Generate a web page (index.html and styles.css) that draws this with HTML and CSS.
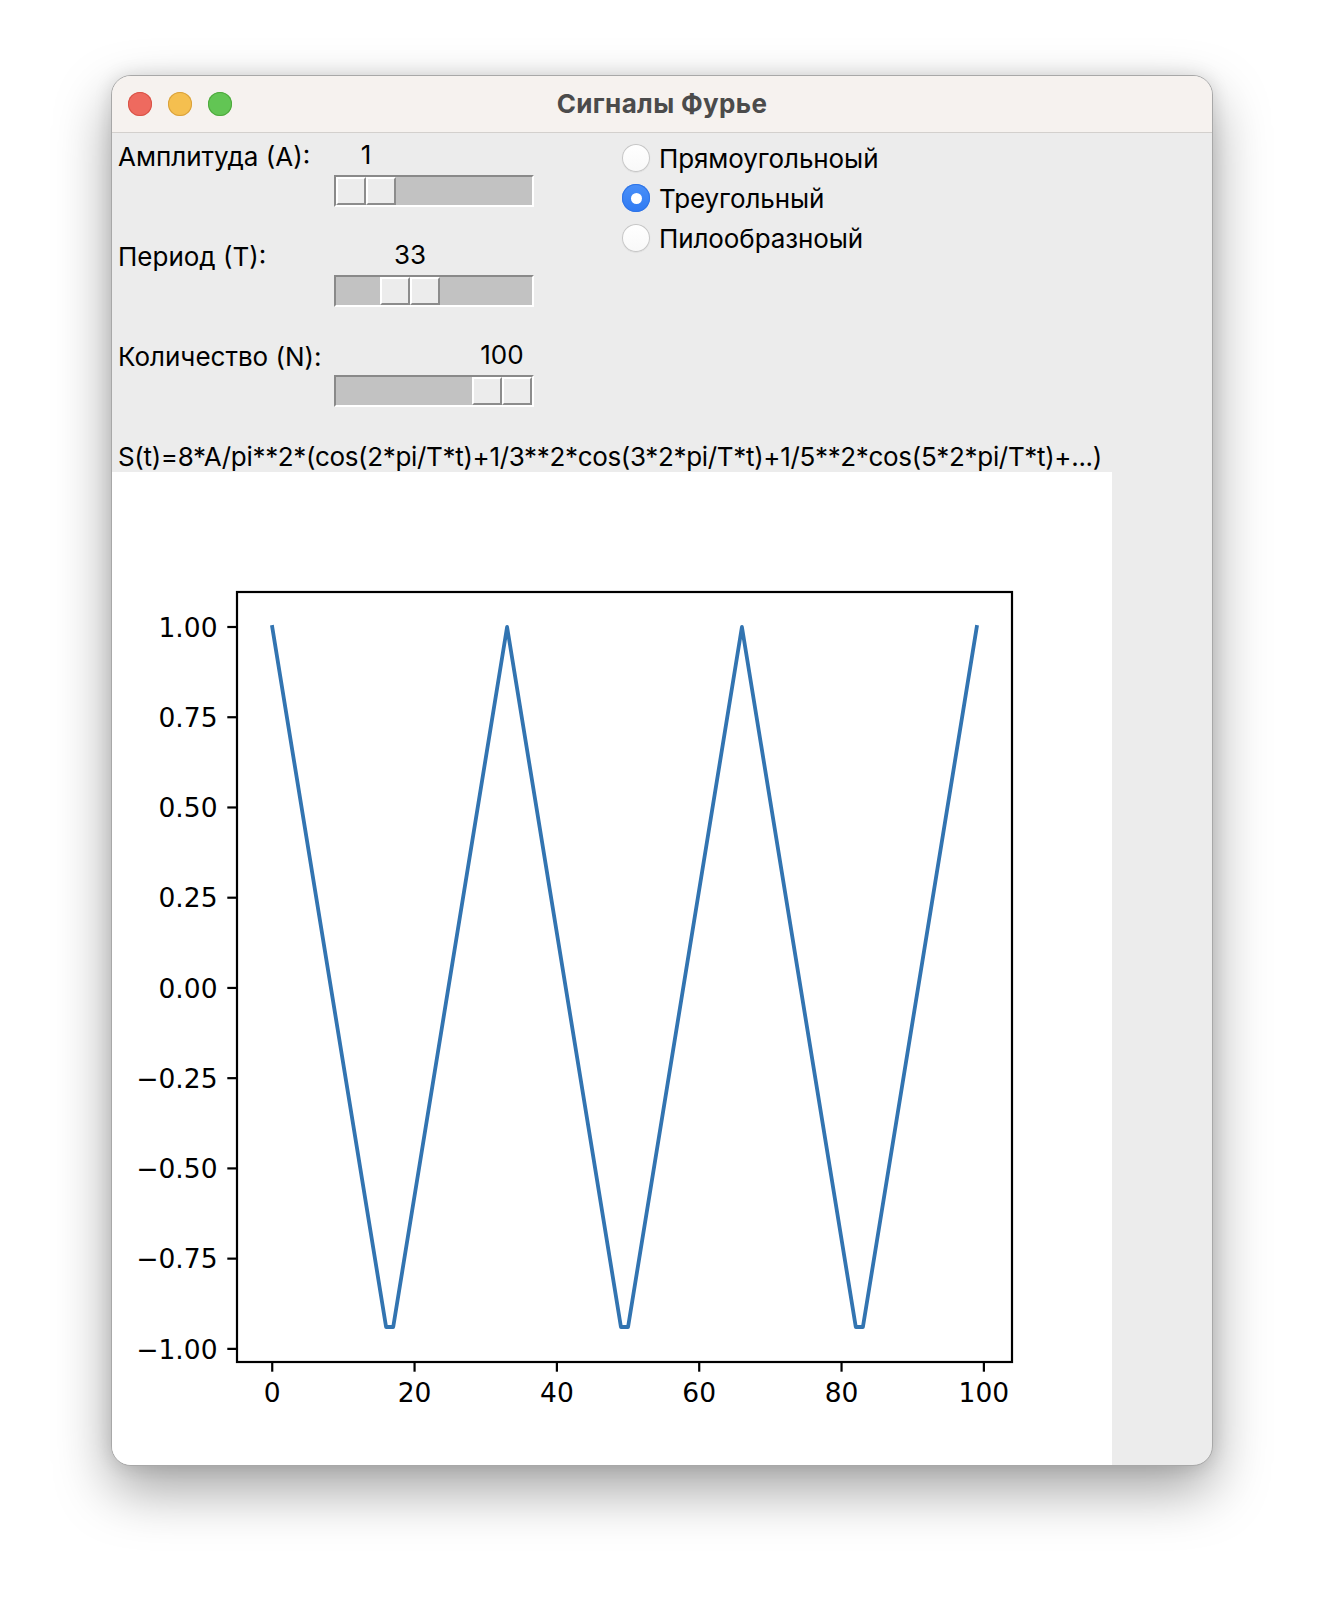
FILE: index.html
```html
<!DOCTYPE html>
<html lang="ru">
<head>
<meta charset="utf-8">
<title>Сигналы Фурье</title>
<link rel="stylesheet" href="styles.css">
</head>
<body>
<div class="stage">
  <div class="window">
    <div class="titlebar">
      <div class="lights">
        <span class="light red"></span>
        <span class="light yellow"></span>
        <span class="light green"></span>
      </div>
      <div class="title">Сигналы Фурье</div>
      <div></div>
    </div>

    <div class="controls">
      <div class="sliders">
        <div class="row">
          <div class="label">Амплитуда (А):</div>
          <div class="scale" style="--p:0">
            <div class="value-track"><div class="value">1</div></div>
            <div class="trough"><div class="handle"><span class="half"></span><span class="half"></span></div></div>
          </div>
        </div>
        <div class="row">
          <div class="label">Период (Т):</div>
          <div class="scale" style="--p:0.3232">
            <div class="value-track"><div class="value">33</div></div>
            <div class="trough"><div class="handle"><span class="half"></span><span class="half"></span></div></div>
          </div>
        </div>
        <div class="row">
          <div class="label">Количество (N):</div>
          <div class="scale" style="--p:1">
            <div class="value-track"><div class="value">100</div></div>
            <div class="trough"><div class="handle"><span class="half"></span><span class="half"></span></div></div>
          </div>
        </div>
      </div>

      <div class="radios">
        <div class="radio"><span class="dot"></span><span class="rtext">Прямоугольноый</span></div>
        <div class="radio"><span class="dot on"></span><span class="rtext">Треугольный</span></div>
        <div class="radio"><span class="dot"></span><span class="rtext">Пилообразноый</span></div>
      </div>
    </div>

    <div class="formula">S(t)=8*A/pi**2*(cos(2*pi/T*t)+1/3**2*cos(3*2*pi/T*t)+1/5**2*cos(5*2*pi/T*t)+...)</div>

    <svg class="canvas" width="1000" height="1000" viewBox="0 0 1000 1000">
      <rect x="0" y="0" width="1000" height="1000" fill="#ffffff"/>
      <polyline class="wave" points="160.23,155 274.09,855 281.21,855 395.08,155 508.94,855 516.06,855 629.92,155 743.79,855 750.91,855 864.77,155"/>
      <rect class="spine" x="125" y="120" width="775" height="770"/>
      <g class="ticks">
        <line x1="115.3" y1="155" x2="125" y2="155"/>
        <line x1="115.3" y1="245.23" x2="125" y2="245.23"/>
        <line x1="115.3" y1="335.47" x2="125" y2="335.47"/>
        <line x1="115.3" y1="425.7" x2="125" y2="425.7"/>
        <line x1="115.3" y1="515.94" x2="125" y2="515.94"/>
        <line x1="115.3" y1="606.17" x2="125" y2="606.17"/>
        <line x1="115.3" y1="696.41" x2="125" y2="696.41"/>
        <line x1="115.3" y1="786.64" x2="125" y2="786.64"/>
        <line x1="115.3" y1="876.88" x2="125" y2="876.88"/>
        <line x1="160.23" y1="890" x2="160.23" y2="899.7"/>
        <line x1="302.56" y1="890" x2="302.56" y2="899.7"/>
        <line x1="444.89" y1="890" x2="444.89" y2="899.7"/>
        <line x1="587.22" y1="890" x2="587.22" y2="899.7"/>
        <line x1="729.55" y1="890" x2="729.55" y2="899.7"/>
        <line x1="871.88" y1="890" x2="871.88" y2="899.7"/>
      </g>
      <g class="ylabels">
        <text x="105.5" y="164.6">1.00</text>
        <text x="105.5" y="254.8">0.75</text>
        <text x="105.5" y="345.1">0.50</text>
        <text x="105.5" y="435.3">0.25</text>
        <text x="105.5" y="525.5">0.00</text>
        <text x="105.5" y="615.8">−0.25</text>
        <text x="105.5" y="706">−0.50</text>
        <text x="105.5" y="796.2">−0.75</text>
        <text x="105.5" y="886.5">−1.00</text>
      </g>
      <g class="xlabels">
        <text x="160.23" y="930">0</text>
        <text x="302.56" y="930">20</text>
        <text x="444.89" y="930">40</text>
        <text x="587.22" y="930">60</text>
        <text x="729.55" y="930">80</text>
        <text x="871.88" y="930">100</text>
      </g>
    </svg>
  </div>
</div>
</body>
</html>
```

FILE: styles.css
```css
* { box-sizing: border-box; }
html, body { margin: 0; padding: 0; }
body {
  width: 1324px;
  height: 1614px;
  background: #ffffff;
  font-family: Inter, "Noto Sans", "Liberation Sans", sans-serif;
  color: #000;
  overflow: hidden;
}
.stage { padding: 75px 0 0 111px; }
.window {
  width: 1102px;
  height: 1391px;
  border: 1px solid #a8a8a8;
  border-radius: 20px;
  overflow: hidden;
  background: #ececec;
  box-shadow: 0 24px 55px rgba(0,0,0,0.36), 0 0 18px rgba(0,0,0,0.12);
}
.titlebar {
  height: 57px;
  background: #f6f2ef;
  border-bottom: 1px solid #d3d0cd;
  display: grid;
  grid-template-columns: 1fr auto 1fr;
  align-items: center;
}
.lights { display: flex; gap: 16px; padding-left: 16px; }
.light {
  width: 24px; height: 24px; border-radius: 50%;
  display: block;
}
.red { background: #ee6a5f; box-shadow: inset 0 0 0 1px #d85347; }
.yellow { background: #f5bf4f; box-shadow: inset 0 0 0 1px #d9a13c; }
.green { background: #62c554; box-shadow: inset 0 0 0 1px #4ea83d; }
.title {
  font-size: 26px;
  font-weight: 700;
  color: #4b4b4b;
  letter-spacing: 0.35px;
  padding-bottom: 2px;
}

.controls { display: flex; padding: 2px 0 0 6px; height: 302px; font-size: 26px; }
.sliders { display: flex; flex-direction: column; }
.row { display: flex; height: 100px; }
.label { width: 216px; line-height: 40px; padding-top: 2px; white-space: nowrap; }
.scale { width: 200px; }
.value-track { height: 40px; padding: 0 2px; }
.value {
  width: 60px;
  margin-left: calc(var(--p) * 136px);
  text-align: center;
  line-height: 40px;
}
.trough {
  height: 32px;
  border: 2px solid;
  border-color: #898989 #ffffff #ffffff #898989;
  background: #c2c2c2;
  display: flex;
}
.handle { display: flex; margin-left: calc(var(--p) * 136px); }
.half {
  display: block;
  width: 30px;
  height: 28px;
  background: #ececec;
  border: 2px solid;
  border-color: #ffffff #8c8c8c #8c8c8c #ffffff;
}

.radios { margin-left: 88px; padding-top: 3px; display: flex; flex-direction: column; }
.radio { display: flex; align-items: center; height: 40px; white-space: nowrap; }
.rtext { letter-spacing: -0.1px; }
.dot {
  width: 28px; height: 28px; border-radius: 50%;
  background: linear-gradient(#ffffff, #f8f8f8);
  box-shadow: inset 0 0 0 1px #c6c6c6, 0 0.5px 1px rgba(0,0,0,0.1);
  margin-right: 9px;
  display: flex; align-items: center; justify-content: center;
}
.dot.on {
  background: linear-gradient(#4a90f8, #2f7af3);
  box-shadow: inset 0 0 0 1px #2f74e6;
}
.dot.on::after {
  content: "";
  width: 11px; height: 11px; border-radius: 50%;
  background: #ffffff;
}

.formula {
  height: 37px;
  padding: 6px 0 0 6px;
  line-height: 31px;
  font-size: 26px;
  letter-spacing: -0.33px;
  white-space: nowrap;
}

.canvas { display: block; }
.wave {
  fill: none;
  stroke: #3274b1;
  stroke-width: 3.8;
  stroke-linejoin: round;
  stroke-linecap: square;
}
.spine { fill: none; stroke: #000; stroke-width: 2.2; }
.ticks line { stroke: #000; stroke-width: 2.2; }
.ylabels text, .xlabels text {
  font-family: "DejaVu Sans", sans-serif;
  font-size: 26.5px;
  fill: #000;
}
.ylabels text { text-anchor: end; }
.xlabels text { text-anchor: middle; }
```
